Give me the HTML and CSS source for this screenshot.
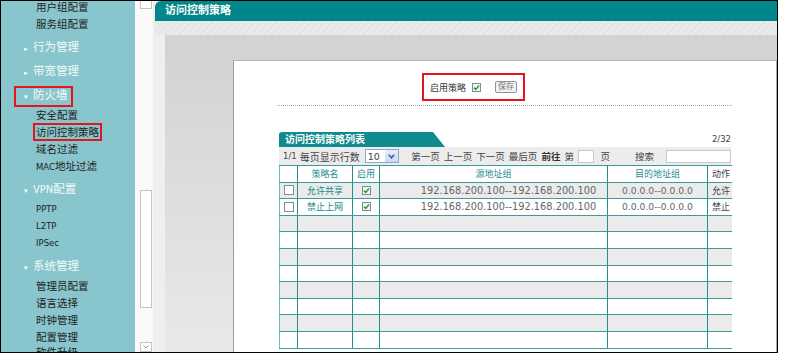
FILE: index.html
```html
<!DOCTYPE html>
<html lang="zh-CN">
<head>
    <meta charset="UTF-8">
    <title>访问控制策略</title>
    <link rel="stylesheet" href="styles.css">
</head>
<body>

<div class="frame">
    <aside class="sidebar">
        <div class="item">用户组配置</div>
        <div class="item">服务组配置</div>
        <div class="group"><span class="arrow">▸</span>行为管理</div>
        <div class="group"><span class="arrow">▸</span>带宽管理</div>
        <div class="group"><span class="marked-group"><span class="arrow">▾</span>防火墙</span></div>
        <div class="item">安全配置</div>
        <div class="item"><span class="marked">访问控制策略</span></div>
        <div class="item">域名过滤</div>
        <div class="item"><span class="latin">MAC</span>地址过滤</div>
        <div class="group"><span class="arrow">▾</span><span class="latin">VPN</span>配置</div>
        <div class="item latin">PPTP</div>
        <div class="item latin">L2TP</div>
        <div class="item latin">IPSec</div>
        <div class="group"><span class="arrow">▾</span>系统管理</div>
        <div class="item">管理员配置</div>
        <div class="item">语言选择</div>
        <div class="item">时钟管理</div>
        <div class="item">配置管理</div>
        <div class="item last">软件升级</div>
    </aside>

    <div class="scrollbar">
        <div class="sb-up"></div>
        <div class="sb-thumb"></div>
        <div class="sb-down">
            <svg width="6" height="4" viewBox="0 0 6 4"><path d="M0.5 0.5 L3 3 L5.5 0.5" fill="none" stroke="#999" stroke-width="1"/></svg>
        </div>
    </div>

    <main class="main">
        <div class="title-bar">访问控制策略</div>
        <div class="band"></div>
        <div class="content">
            <div class="content-top"></div>
            <div class="panel">
                <div class="inner">
                    <div class="enable-box">
                        <span class="enable-label">启用策略</span>
                        <svg class="check" width="9" height="9" viewBox="0 0 9 9"><rect x="0.5" y="0.5" width="8" height="8" fill="#f2f5f2" stroke="#7d8c99"/><path d="M2 4.6 L3.8 6.4 L7 2.6" fill="none" stroke="#2f9a2f" stroke-width="1.5"/></svg>
                        <span class="save-btn">保存</span>
                    </div>
                    <div class="dotted"></div>

                    <div class="tab-row">
                        <div class="tab">访问控制策略列表</div>
                        <div class="count">2/32</div>
                    </div>

                    <div class="toolbar">
                        <span class="num">1/1</span>
                        <span class="per-page">每页显示行数</span>
                        <div class="select">
                            <span>10</span>
                            <div class="drop">
                                <svg width="7" height="5" viewBox="0 0 7 5"><path d="M0.8 0.8 L3.5 3.8 L6.2 0.8" fill="none" stroke="#3e5f9c" stroke-width="1.6"/></svg>
                            </div>
                        </div>
                        <span class="pager">第一页</span>
                        <span class="pager">上一页</span>
                        <span class="pager">下一页</span>
                        <span class="pager">最后页</span>
                        <span class="pager go">前往</span>
                        <span class="pager">第</span>
                        <div class="page-input"></div>
                        <span class="pager">页</span>
                        <span class="search-label">搜索</span>
                        <div class="search-input"></div>
                    </div>

                    <table class="grid">
                        <colgroup>
                            <col style="width: 18px">
                            <col style="width: 55px">
                            <col style="width: 27px">
                            <col style="width: 228px">
                            <col style="width: 100px">
                            <col style="width: 24px">
                        </colgroup>
                        <tr class="head">
                            <td></td>
                            <td>策略名</td>
                            <td>启用</td>
                            <td>源地址组</td>
                            <td>目的地址组</td>
                            <td class="action">动作</td>
                        </tr>
                        <tr>
                            <td><svg class="box" width="10" height="10" viewBox="0 0 10 10"><rect x="0.5" y="0.5" width="9" height="9" fill="#fff" stroke="#8a8a8a"/></svg></td>
                            <td class="name">允许共享</td>
                            <td><svg class="box" width="9" height="9" viewBox="0 0 9 9"><rect x="0.5" y="0.5" width="8" height="8" fill="#f2f5f2" stroke="#7d8c99"/><path d="M2 4.6 L3.8 6.4 L7 2.6" fill="none" stroke="#2f9a2f" stroke-width="1.5"/></svg></td>
                            <td class="ip">192.168.200.100--192.168.200.100</td>
                            <td class="ip dst">0.0.0.0--0.0.0.0</td>
                            <td class="action">允许</td>
                        </tr>
                        <tr>
                            <td><svg class="box" width="10" height="10" viewBox="0 0 10 10"><rect x="0.5" y="0.5" width="9" height="9" fill="#fff" stroke="#8a8a8a"/></svg></td>
                            <td class="name">禁止上网</td>
                            <td><svg class="box" width="9" height="9" viewBox="0 0 9 9"><rect x="0.5" y="0.5" width="8" height="8" fill="#f2f5f2" stroke="#7d8c99"/><path d="M2 4.6 L3.8 6.4 L7 2.6" fill="none" stroke="#2f9a2f" stroke-width="1.5"/></svg></td>
                            <td class="ip">192.168.200.100--192.168.200.100</td>
                            <td class="ip dst">0.0.0.0--0.0.0.0</td>
                            <td class="action">禁止</td>
                        </tr>
                        <tr><td></td><td></td><td></td><td></td><td></td><td></td></tr>
                        <tr><td></td><td></td><td></td><td></td><td></td><td></td></tr>
                        <tr><td></td><td></td><td></td><td></td><td></td><td></td></tr>
                        <tr><td></td><td></td><td></td><td></td><td></td><td></td></tr>
                        <tr><td></td><td></td><td></td><td></td><td></td><td></td></tr>
                        <tr><td></td><td></td><td></td><td></td><td></td><td></td></tr>
                        <tr><td></td><td></td><td></td><td></td><td></td><td></td></tr>
                        <tr><td></td><td></td><td></td><td></td><td></td><td></td></tr>
                    </table>
                </div>
            </div>
        </div>
    </main>
</div>

</body>
</html>
```

FILE: styles.css
```css
body {
    margin: 0;
    background-color: #fff;
    font-family: "DejaVu Sans", "Noto Sans CJK SC", sans-serif;
    color: #333;
}

.frame {
    width: 778px;
    height: 353px;
    box-sizing: border-box;
    border: 1px solid #000;
    display: flex;
    overflow: hidden;
}

/* left menu */
.sidebar {
    width: 134px;
    flex-shrink: 0;
    background-color: #88c5cc;
    overflow: hidden;
}

.item {
    height: 17px;
    line-height: 17px;
    padding-left: 35px;
    font-size: 10.5px;
    color: #222;
    white-space: nowrap;
}

.item:first-child {
    margin-top: -2px;
}

/* last entry is only half visible under the frame edge */
.item.last {
    height: 12px;
    line-height: 12px;
    overflow: hidden;
}

.latin {
    font-size: 8.5px;
}

.group {
    height: 24px;
    line-height: 24px;
    margin-top: 2px;
    padding-left: 23px;
    font-size: 11.5px;
    color: #f2fafa;
    white-space: nowrap;
}

.group + .group {
    margin-top: 0;
}

.group .latin {
    font-size: 10px;
}

.arrow {
    display: inline-block;
    width: 9px;
    font-size: 7px;
    color: #fff;
}

.marked-group {
    display: inline-block;
    line-height: 15px;
    margin-left: -8px;
    padding: 0 3px 0 8px;
    outline: 2px solid #e3161d;
}

.marked {
    outline: 2px solid #e3161d;
    outline-offset: 1px;
}

/* fake scrollbar */
.scrollbar {
    width: 18px;
    flex-shrink: 0;
    background-color: #fafafa;
    display: flex;
    flex-direction: column;
}

.sb-up,
.sb-thumb,
.sb-down {
    width: 12px;
    margin-left: 5px;
    box-sizing: border-box;
    border: 1px solid #c4c4c4;
    background-color: #fff;
}

.sb-up {
    height: 8px;
    border-top: none;
}

.sb-thumb {
    height: 118px;
    margin-top: 181px;
}

.sb-down {
    height: 10px;
    margin-top: auto;
    display: flex;
    align-items: center;
    justify-content: center;
}

/* right side */
.main {
    flex: 1;
    display: flex;
    flex-direction: column;
    background-color: #efefef;
}

.title-bar {
    height: 20px;
    line-height: 20px;
    margin-left: 2px;
    padding-left: 10px;
    background-color: #00878b;
    border-top-left-radius: 6px;
    color: #fff;
    font-size: 11px;
    font-weight: bold;
}

.band {
    height: 14px;
    margin-left: 2px;
    background: repeating-linear-gradient(135deg, #e6e6e6 0, #e6e6e6 3px, #ececec 3px, #ececec 5px);
}

.content {
    flex: 1;
    margin-left: 12px;
    display: flex;
    flex-direction: column;
    background: linear-gradient(#d2d2d2, #e9e9e9);
}

.content-top {
    height: 25px;
    background-color: #d3d3d3;
}

.panel {
    flex: 1;
    margin-left: 68px;
    background-color: #fff;
    border-left: 1px solid #9c9c9c;
    border-top: 1px solid #b4b4b4;
    border-right: 1px solid #a8a8a8;
}

.inner {
    width: 455px;
    margin-left: 43px;
}

.enable-box {
    width: 103px;
    height: 28px;
    margin-top: 12px;
    margin-left: 145px;
    box-sizing: border-box;
    border: 2px solid #e3161d;
    display: flex;
    align-items: center;
    padding-left: 6px;
}

.enable-label {
    font-size: 9px;
    color: #333;
}

.check {
    margin-left: 6px;
}

.save-btn {
    margin-left: 14px;
    width: 22px;
    height: 12px;
    box-sizing: border-box;
    border: 1px solid #8896a4;
    border-radius: 2px;
    background-color: #f1f1f1;
    font-size: 8px;
    line-height: 10px;
    text-align: center;
    color: #777;
}

.dotted {
    margin-top: 4px;
    border-top: 1px dotted #a8a8a8;
}

.tab-row {
    margin-top: 25px;
    height: 16px;
    display: flex;
    justify-content: space-between;
    align-items: flex-end;
}

.tab {
    width: 166px;
    height: 15px;
    line-height: 15px;
    margin-left: 2px;
    padding-left: 6px;
    box-sizing: border-box;
    background-color: #0f8a8e;
    border-top-left-radius: 3px;
    clip-path: polygon(0 0, 154px 0, 100% 100%, 0 100%);
    color: #fff;
    font-size: 10px;
    font-weight: bold;
}

.count {
    margin-right: 1px;
    margin-bottom: 3px;
    font-size: 8.5px;
    color: #444;
}

.toolbar {
    width: 452px;
    height: 18px;
    margin-left: 2px;
    background-color: #ececec;
    display: flex;
    align-items: center;
    font-size: 9.5px;
    color: #444;
    white-space: nowrap;
}

.num {
    margin-left: 4px;
    font-size: 8.5px;
}

.per-page {
    margin-left: 3px;
    font-size: 10px;
}

.select {
    width: 40px;
    height: 14px;
    margin-left: 5px;
    box-sizing: border-box;
    border: 1px solid #8fa6c4;
    background-color: #fff;
    display: flex;
    align-items: center;
    justify-content: space-between;
    padding-left: 2px;
    font-size: 9.5px;
}

.drop {
    width: 13px;
    height: 12px;
    background: linear-gradient(#e6eefa, #c9d8ef);
    display: flex;
    align-items: center;
    justify-content: center;
}

.pager {
    margin-left: 4px;
}

.select + .pager {
    margin-left: 12px;
}

.go {
    font-weight: bold;
    color: #333;
}

.page-input {
    width: 18px;
    height: 13px;
    margin-left: 4px;
    box-sizing: border-box;
    border: 1px solid #c8c8c8;
    background-color: #fff;
}

.page-input + .pager {
    margin-left: 7px;
}

.search-label {
    margin-left: 25px;
}

.search-input {
    width: 76px;
    height: 13px;
    margin-left: 12px;
    box-sizing: border-box;
    border: 1px solid #c8c8c8;
    background-color: #fff;
}

/* list table */
.grid {
    width: 452px;
    margin-left: 2px;
    border-collapse: collapse;
    table-layout: fixed;
    border-left: 1px solid #6cbcbc;
}

.grid tr {
    height: 16.6px;
}

.grid tr:nth-child(even) {
    background-color: #ebebeb;
}

.grid td {
    padding: 0;
    border-top: 1px solid #3a9c9c;
    border-bottom: 1px solid #3a9c9c;
    border-right: 1px solid #23908f;
    text-align: center;
    font-size: 9px;
    color: #555;
    white-space: nowrap;
    overflow: hidden;
    vertical-align: middle;
}

.grid td:last-child {
    border-right: none;
}

.grid .head td {
    color: #1b8d8d;
    background-color: #fff;
}

.grid td.action {
    text-align: left;
    padding-left: 4px;
    color: #444;
}

.grid td.name {
    color: #178a8a;
}

.grid td.ip {
    padding-left: 30px;
    font-size: 9.8px;
    color: #666;
}

.grid td.dst {
    padding-left: 0;
    font-size: 9.2px;
}

.box {
    display: block;
    margin: 0 auto;
}
```
